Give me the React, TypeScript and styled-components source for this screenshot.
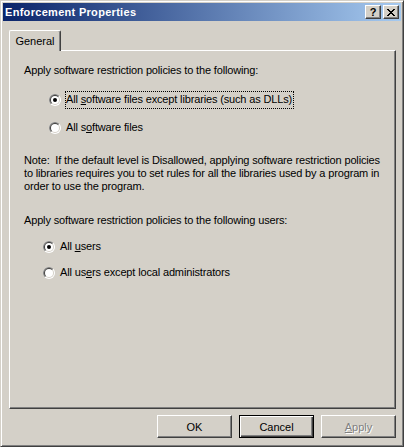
import React from "react";
import styled, { createGlobalStyle } from "styled-components";

const face = "#D4D0C8";

const GlobalStyle = createGlobalStyle`
  html, body {
    margin: 0;
    padding: 0;
    background: ${face};
  }
  body {
    font-family: "Liberation Sans", Arial, sans-serif;
    font-size: 11px;
    color: #000;
  }
`;

const Window = styled.div`
  box-sizing: border-box;
  width: 404px;
  height: 447px;
  background: ${face};
  border: 1px solid;
  border-color: ${face} #404040 #404040 ${face};
  box-shadow: inset 1px 1px #fff, inset -1px -1px #808080;
  padding: 2px;
  display: flex;
  flex-direction: column;
`;

const TitleBar = styled.div`
  height: 18px;
  background: linear-gradient(to right, #0a246a, #a6caf0);
  display: flex;
  align-items: center;
  padding: 0 2px 0 2px;
  gap: 2px;
`;

const Title = styled.div`
  flex: 1;
  color: #fff;
  font-weight: bold;
  font-size: 11px;
  letter-spacing: 0.3px;
  padding-left: 0;
  white-space: nowrap;
`;

const CaptionButton = styled.div`
  box-sizing: border-box;
  width: 16px;
  height: 14px;
  background: ${face};
  border: 1px solid;
  border-color: #fff #404040 #404040 #fff;
  box-shadow: inset -1px -1px #808080;
  display: flex;
  align-items: center;
  justify-content: center;
  font-weight: bold;
  font-size: 11px;
  line-height: 1;
`;

const Body = styled.div`
  flex: 1;
  display: flex;
  flex-direction: column;
  padding: 9px 5px 0 6px;
`;

const TabStrip = styled.div`
  display: flex;
  height: 20px;
  position: relative;
  z-index: 1;
`;

const Tab = styled.div`
  box-sizing: border-box;
  width: 52px;
  height: 21px;
  background: ${face};
  border-left: 1px solid #fff;
  border-top: 1px solid #fff;
  border-right: 1px solid #404040;
  border-top-left-radius: 2px;
  border-top-right-radius: 2px;
  box-shadow: inset -1px 0 #808080;
  display: flex;
  align-items: center;
  justify-content: center;
  padding-bottom: 1px;
`;

const Panel = styled.div`
  box-sizing: border-box;
  height: 359px;
  border: 1px solid;
  border-color: #fff #404040 #404040 #fff;
  box-shadow: inset -1px -1px #808080;
  padding: 13px 14px 0 14px;
  display: flex;
  flex-direction: column;
`;

const Line = styled.div<{ $top?: number }>`
  line-height: 13px;
  white-space: pre;
  letter-spacing: -0.15px;
  margin-top: ${({ $top }) => $top ?? 0}px;
`;

const Group = styled.div<{ $indent: number; $top: number; $gap: number }>`
  display: flex;
  flex-direction: column;
  gap: ${({ $gap }) => $gap}px;
  padding-left: ${({ $indent }) => $indent}px;
  margin-top: ${({ $top }) => $top}px;
`;

const RadioRow = styled.div`
  display: flex;
  align-items: center;
  gap: 4px;
  height: 17px;
`;

const RadioLabel = styled.span<{ $focus?: boolean }>`
  border: 1px dotted ${({ $focus }) => ($focus ? "#000" : "transparent")};
  padding: 1px 1px 2px 0;
  line-height: 13px;
  letter-spacing: -0.15px;
  white-space: nowrap;
`;

const Key = styled.span`
  text-decoration: underline;
  text-underline-offset: 1px;
`;

const ButtonRow = styled.div`
  display: flex;
  justify-content: flex-end;
  gap: 7px;
  margin-top: 6px;
`;

const Button = styled.div<{ $default?: boolean; $disabled?: boolean }>`
  box-sizing: border-box;
  width: 75px;
  height: 23px;
  background: ${face};
  display: flex;
  align-items: center;
  justify-content: center;
  border: 1px solid;
  border-color: ${({ $default }) =>
    $default ? "#000" : "#fff #404040 #404040 #fff"};
  box-shadow: ${({ $default }) =>
    $default
      ? "inset 1px 1px #fff, inset -1px -1px #404040, inset -2px -2px #808080"
      : "inset -1px -1px #808080"};
  color: ${({ $disabled }) => ($disabled ? "#808080" : "#000")};
  text-shadow: ${({ $disabled }) => ($disabled ? "1px 1px #fff" : "none")};
`;

const Radio = ({ checked }: { checked?: boolean }) => (
  <svg width="12" height="12" viewBox="0 0 12 12" style={{ flex: "none" }}>
    <circle cx="6" cy="6" r="6" fill="#fff" />
    <path d="M1.757 10.243 A6 6 0 0 1 10.243 1.757 Z" fill="#808080" />
    <circle cx="6" cy="6" r="5" fill={face} />
    <path d="M2.464 9.536 A5 5 0 0 1 9.536 2.464 Z" fill="#404040" />
    <circle cx="6" cy="6" r="4" fill="#fff" />
    {checked && <circle cx="6" cy="6" r="2" fill="#000" />}
  </svg>
);

const CloseGlyph = () => {
  const rows = [
    "XX....XX",
    ".XX..XX.",
    "..XXXX..",
    "...XX...",
    "..XXXX..",
    ".XX..XX.",
    "XX....XX",
  ];
  return (
    <svg width="8" height="7" viewBox="0 0 8 7" shapeRendering="crispEdges">
      {rows.flatMap((r, y) =>
        r
          .split("")
          .map((c, x) =>
            c === "X" ? <rect key={`${x}-${y}`} x={x} y={y} width="1" height="1" fill="#000" /> : null
          )
      )}
    </svg>
  );
};

export default function App() {
  return (
    <>
      <GlobalStyle />
      <Window>
        <TitleBar>
          <Title>Enforcement Properties</Title>
          <CaptionButton>?</CaptionButton>
          <CaptionButton>
            <CloseGlyph />
          </CaptionButton>
        </TitleBar>
        <Body>
          <TabStrip>
            <Tab>General</Tab>
          </TabStrip>
          <Panel>
            <Line>Apply software restriction policies to the following:</Line>
            <Group $indent={25} $top={14} $gap={11}>
              <RadioRow>
                <Radio checked />
                <RadioLabel $focus>
                  All <Key>s</Key>oftware files except libraries (such as DLLs)
                </RadioLabel>
              </RadioRow>
              <RadioRow>
                <Radio />
                <RadioLabel>
                  All s<Key>o</Key>ftware files
                </RadioLabel>
              </RadioRow>
            </Group>
            <Line $top={18}>
              {"Note:  If the default level is Disallowed, applying software restriction policies"}
            </Line>
            <Line>to libraries requires you to set rules for all the libraries used by a program in</Line>
            <Line>order to use the program.</Line>
            <Line $top={21}>Apply software restriction policies to the following users:</Line>
            <Group $indent={19} $top={11} $gap={9}>
              <RadioRow>
                <Radio checked />
                <RadioLabel>
                  All <Key>u</Key>sers
                </RadioLabel>
              </RadioRow>
              <RadioRow>
                <Radio />
                <RadioLabel>
                  All us<Key>e</Key>rs except local administrators
                </RadioLabel>
              </RadioRow>
            </Group>
          </Panel>
          <ButtonRow>
            <Button>OK</Button>
            <Button $default>Cancel</Button>
            <Button $disabled>
              <Key>A</Key>pply
            </Button>
          </ButtonRow>
        </Body>
      </Window>
    </>
  );
}
